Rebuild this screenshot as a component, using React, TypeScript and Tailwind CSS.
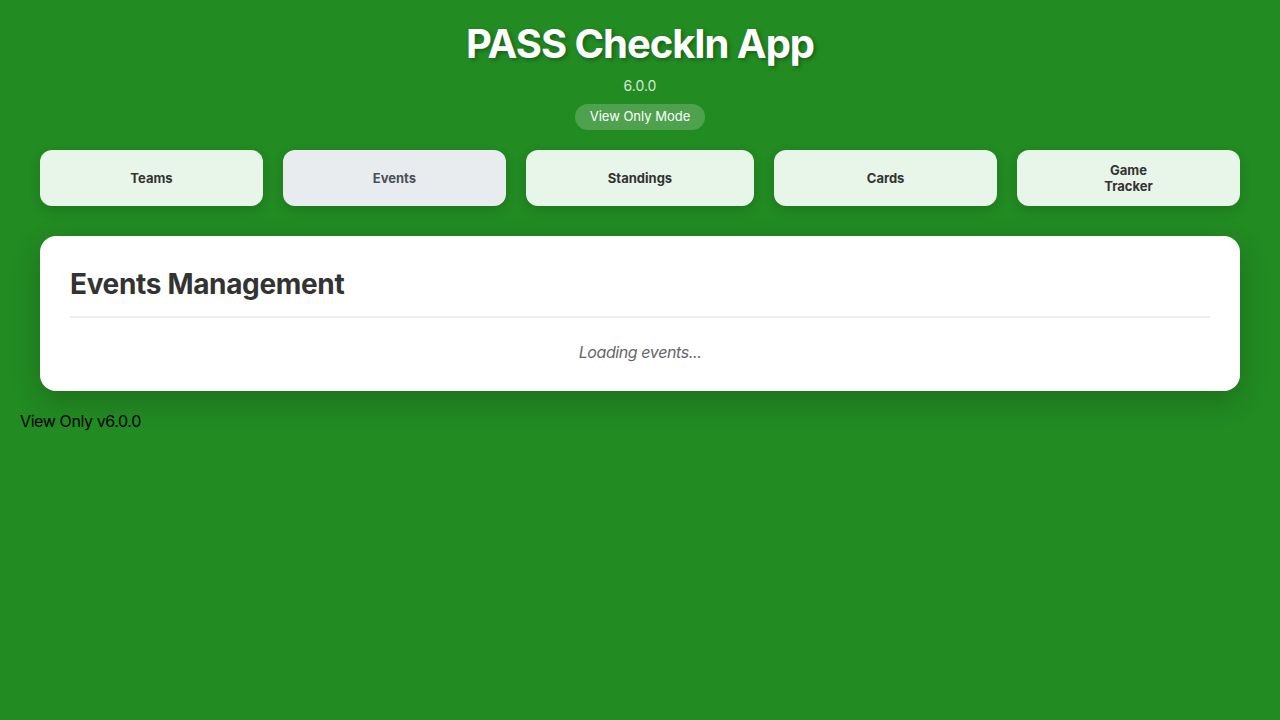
import { useState } from "react";

const tabs = [
  { id: "teams", label: "Teams" },
  { id: "events", label: "Events" },
  { id: "standings", label: "Standings" },
  { id: "cards", label: "Cards" },
  { id: "tracker", label: "Game Tracker" },
];

export default function App() {
  const [active, setActive] = useState("events");

  return (
    <div
      className="min-h-screen bg-[#228B22] p-5 text-black"
      style={{ fontFamily: "Inter, 'Noto Sans', sans-serif" }}
    >
      <div className="px-5">
        {/* ── Header ── */}
        <header className="flex flex-col items-center text-center">
          <h1 className="text-[40px] leading-[48px] font-bold tracking-[-0.026em] text-white [text-shadow:2px_2px_4px_rgba(0,0,0,0.3)]">
            PASS CheckIn App
          </h1>
          <p className="mt-2 text-sm leading-5 text-white/80">6.0.0</p>
          <span className="mt-2 inline-flex h-[26px] items-center rounded-full bg-white/20 px-[15px] text-[13px] text-white">
            View Only Mode
          </span>
        </header>

        {/* ── Tabs ── */}
        <nav className="mt-5 flex gap-5">
          {tabs.map((t) => (
            <button
              key={t.id}
              onClick={() => setActive(t.id)}
              className={
                "flex-1 basis-0 rounded-xl px-[82px] py-3 text-[13px] leading-4 font-bold shadow-[0_4px_12px_rgba(0,0,0,0.15)] " +
                (active === t.id
                  ? "bg-[#e9ecef] text-[#495057]"
                  : "bg-[#e8f5e9] text-[#333]")
              }
            >
              {t.label}
            </button>
          ))}
        </nav>

        {/* ── Events card ── */}
        <section className="mt-[30px] mb-[18px] rounded-2xl bg-white px-[30px] pt-[30px] pb-[27px] shadow-[0_10px_30px_rgba(0,0,0,0.2)]">
          <h2 className="border-b-2 border-[#eee] pb-[14px] text-[28px] leading-9 font-bold tracking-[-0.012em] text-[#333]">
            Events Management
          </h2>
          <p className="mt-[22px] text-center text-base leading-6 italic tracking-[-0.025em] text-[#666]">
            Loading events...
          </p>
        </section>
      </div>

      <div className="text-base leading-6 tracking-[-0.025em]">View Only v6.0.0</div>
    </div>
  );
}
